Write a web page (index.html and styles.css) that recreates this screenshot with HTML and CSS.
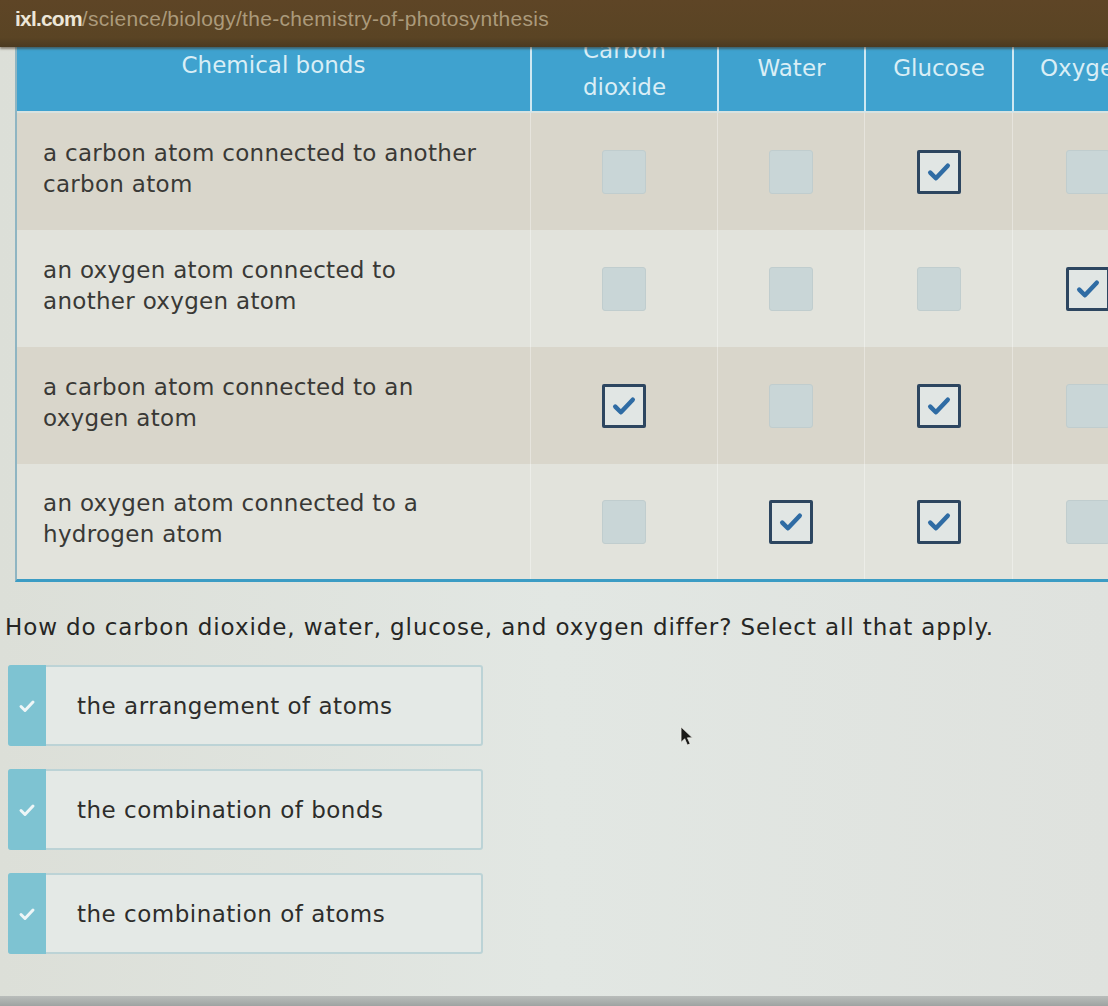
FILE: index.html
```html
<!DOCTYPE html>
<html>
<head>
<meta charset="utf-8">
<link rel="stylesheet" href="styles.css">
</head>
<body>
<div class="urlbar"><span class="host">ixl.com</span><span class="path">/science/biology/the-chemistry-of-photosynthesis</span></div>
<main class="page">
  <div class="table">
    <div class="hcell first">Chemical bonds</div>
    <div class="hcell">Carbon<br>dioxide</div>
    <div class="hcell">Water</div>
    <div class="hcell">Glucose</div>
    <div class="hcell last-col">Oxygen</div>

    <div class="row odd">
      <div class="label"><span>a carbon atom connected to another carbon atom</span></div>
      <div class="cell"><span class="box"></span></div>
      <div class="cell"><span class="box"></span></div>
      <div class="cell"><span class="box on"><svg viewBox="0 0 24 24"><path d="M5 12.5l4.5 4.5L19 7"/></svg></span></div>
      <div class="cell"><span class="box"></span></div>
    </div>
    <div class="row even">
      <div class="label"><span>an oxygen atom connected to another oxygen atom</span></div>
      <div class="cell"><span class="box"></span></div>
      <div class="cell"><span class="box"></span></div>
      <div class="cell"><span class="box"></span></div>
      <div class="cell"><span class="box on"><svg viewBox="0 0 24 24"><path d="M5 12.5l4.5 4.5L19 7"/></svg></span></div>
    </div>
    <div class="row odd">
      <div class="label"><span>a carbon atom connected to an oxygen atom</span></div>
      <div class="cell"><span class="box on"><svg viewBox="0 0 24 24"><path d="M5 12.5l4.5 4.5L19 7"/></svg></span></div>
      <div class="cell"><span class="box"></span></div>
      <div class="cell"><span class="box on"><svg viewBox="0 0 24 24"><path d="M5 12.5l4.5 4.5L19 7"/></svg></span></div>
      <div class="cell"><span class="box"></span></div>
    </div>
    <div class="row even last">
      <div class="label"><span>an oxygen atom connected to a hydrogen atom</span></div>
      <div class="cell"><span class="box"></span></div>
      <div class="cell"><span class="box on"><svg viewBox="0 0 24 24"><path d="M5 12.5l4.5 4.5L19 7"/></svg></span></div>
      <div class="cell"><span class="box on"><svg viewBox="0 0 24 24"><path d="M5 12.5l4.5 4.5L19 7"/></svg></span></div>
      <div class="cell"><span class="box"></span></div>
    </div>
  </div>

  <p class="question">How do carbon dioxide, water, glucose, and oxygen differ? Select all that apply.</p>

  <div class="answers">
    <div class="answer"><span class="tab"><svg viewBox="0 0 24 24"><path d="M6 12.5l4 4L18 8"/></svg></span><span class="atext">the arrangement of atoms</span></div>
    <div class="answer"><span class="tab"><svg viewBox="0 0 24 24"><path d="M6 12.5l4 4L18 8"/></svg></span><span class="atext">the combination of bonds</span></div>
    <div class="answer"><span class="tab"><svg viewBox="0 0 24 24"><path d="M6 12.5l4 4L18 8"/></svg></span><span class="atext">the combination of atoms</span></div>
  </div>
</main>
<svg class="cursor" viewBox="0 0 14 22"><path d="M1 1v17l4-4 3 7 3-1.5-3-6.5h5.5z"/></svg>
<div class="bezel"></div>
</body>
</html>
```
FILE: styles.css
```css
html, body {
  margin: 0;
  padding: 0;
  width: 1108px;
  height: 1006px;
  overflow: hidden;
}
body {
  background: linear-gradient(90deg, #dcdfd8 0%, #e2e7e3 50%, #dfe2de 100%);
  font-family: "DejaVu Sans", Verdana, sans-serif;
  position: relative;
}
.urlbar {
  position: relative;
  z-index: 2;
  height: 47px;
  background: linear-gradient(180deg, #5e4526 0%, #5a4424 80%, #4b3a20 100%);
  box-shadow: 0 2px 2px rgba(60, 40, 20, 0.5);
  font-family: "Liberation Sans", Arial, sans-serif;
  font-size: 21px;
  line-height: 38px;
  padding-left: 15px;
  letter-spacing: 0.3px;
  white-space: nowrap;
}
.host {
  color: #ece6d8;
  font-weight: bold;
  letter-spacing: -0.8px;
}
.path {
  color: #ab9a7b;
}
.page {
  margin-top: -27px;
  padding-left: 15px;
}
.table {
  display: grid;
  grid-template-columns: 513px 187px 147px 148px 150px;
  width: 1145px;
  border-left: 2px solid #8fb5c2;
  border-bottom: 3px solid #3b9cc4;
}
.hcell {
  height: 93px;
  padding-top: 6px;
  background: #3fa2cf;
  color: #d9eef6;
  font-size: 23px;
  line-height: 37px;
  display: flex;
  align-items: center;
  justify-content: center;
  text-align: center;
  border-left: 2px solid #cfe8f2;
  border-bottom: 2px solid #d8e2e0;
  box-sizing: border-box;
  white-space: nowrap;
}
.hcell.first {
  border-left: none;
  padding-top: 0;
}
.hcell.last-col {
  justify-content: flex-start;
  padding-left: 26px;
}
.row {
  display: contents;
}
.label, .cell {
  height: 117px;
  box-sizing: border-box;
  display: flex;
  align-items: center;
}
.label {
  padding: 0 0 6px 26px;
  font-size: 23px;
  letter-spacing: 0.3px;
  line-height: 31px;
  color: #393936;
}
.label span {
  width: 447px;
}
.cell {
  justify-content: center;
  border-left: 1px solid rgba(255, 255, 255, 0.35);
}
.odd .label, .odd .cell {
  background: #d9d6cb;
}
.even .label, .even .cell {
  background: #e2e3dc;
}
.last .label, .last .cell {
  height: 115px;
}
.box {
  width: 44px;
  height: 44px;
  box-sizing: border-box;
  border-radius: 3px;
  background: #c9d6d7;
  border: 1px solid #c0cdce;
  display: flex;
  align-items: center;
  justify-content: center;
}
.box.on {
  background: #e1e6e4;
  border: 3px solid #2d4660;
  border-radius: 2px;
}
.box svg {
  width: 30px;
  height: 30px;
}
.box svg path {
  fill: none;
  stroke: #2f6ca4;
  stroke-width: 3.6;
  stroke-linecap: round;
  stroke-linejoin: round;
}
.question {
  margin: 32px 0 0 -10px;
  font-size: 23px;
  letter-spacing: 0.9px;
  color: #262624;
  white-space: nowrap;
}
.answers {
  margin: 25px 0 0 -7px;
  display: flex;
  flex-direction: column;
  gap: 23px;
}
.answer {
  width: 475px;
  height: 81px;
  box-sizing: border-box;
  display: flex;
  align-items: center;
  background: #e4e9e6;
  border: 2px solid #bcd3d6;
  border-left: none;
  border-radius: 3px;
}
.tab {
  align-self: stretch;
  width: 38px;
  margin: -2px 0;
  background: #7ec3d2;
  border-radius: 3px 0 0 3px;
  display: flex;
  align-items: center;
  justify-content: center;
}
.tab svg {
  width: 24px;
  height: 24px;
}
.tab svg path {
  fill: none;
  stroke: #eef6f7;
  stroke-width: 3;
  stroke-linecap: round;
  stroke-linejoin: round;
}
.atext {
  margin-left: 31px;
  font-size: 23px;
  letter-spacing: 0.5px;
  color: #2d2d2b;
  white-space: nowrap;
}
.cursor {
  position: absolute;
  left: 680px;
  top: 726px;
  width: 13px;
  height: 20px;
}
.cursor path {
  fill: #1a1a18;
  stroke: #f0f0ea;
  stroke-width: 0.8;
}
.bezel {
  position: absolute;
  left: 0;
  right: 0;
  bottom: 0;
  height: 10px;
  background: linear-gradient(180deg, #b9bdbb, #9ea3a2);
}
```
